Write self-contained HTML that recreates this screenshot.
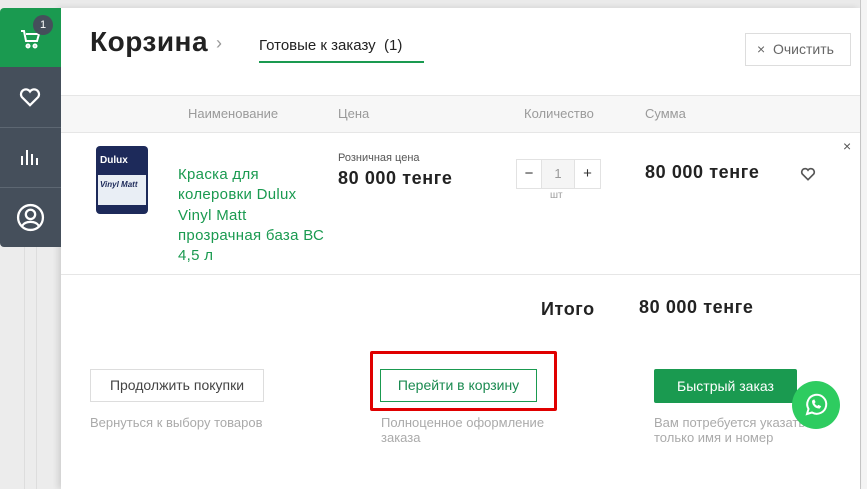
<!DOCTYPE html>
<html><head><meta charset="utf-8"><style>
*{margin:0;padding:0;box-sizing:border-box}
body{width:867px;height:489px;overflow:hidden;background:#ececec;font-family:"Liberation Sans",sans-serif;position:relative}
.a{position:absolute}
.panel{left:61px;top:8px;width:799px;height:481px;background:#fff;box-shadow:-3px 0 6px rgba(0,0,0,.12)}
.sb{left:0;width:61px}
.g{color:#9a9a9a}
.p{font-size:18px;font-weight:bold;color:#222;letter-spacing:.6px}
</style></head><body>
<div class="a" style="left:0;top:0;width:867px;height:8px;background:#eaeaea"></div>
<div class="a" style="left:860px;top:0;width:7px;height:489px;background:#f4f4f4;border-left:1px solid #c8c8c8"></div>
<div class="a" style="left:24px;top:240px;width:1px;height:249px;background:#ddd"></div>
<div class="a" style="left:36px;top:240px;width:1px;height:249px;background:#ddd"></div>
<div class="a panel"></div>
<div class="a sb" style="top:8px;height:59px;background:#1a9a50;border-radius:4px 0 0 0"></div>
<div class="a sb" style="top:67px;height:180px;background:#454f5b;border-radius:0 0 0 4px"></div>
<div class="a sb" style="top:127px;height:1px;background:#5d6772"></div>
<div class="a sb" style="top:187px;height:1px;background:#5d6772"></div>
<svg class="a" style="left:19px;top:27px" width="24" height="24" viewBox="0 0 24 24" fill="none" stroke="#fff" stroke-width="2"><path d="M2 4h3l2 10h11l2-7H7"/><circle cx="9" cy="19" r="1.5"/><circle cx="16" cy="19" r="1.5"/></svg>
<div class="a" style="left:33px;top:15px;width:20px;height:20px;border-radius:50%;background:#454f5b;color:#fff;font-size:11px;text-align:center;line-height:20px">1</div>
<svg class="a" style="left:19px;top:87px" width="22" height="20" viewBox="0 0 24 22" fill="none" stroke="#fff" stroke-width="2.4"><path d="M12 20L3 11a5 5 0 0 1 9-6 5 5 0 0 1 9 6z"/></svg>
<svg class="a" style="left:19px;top:146px" width="22" height="20" viewBox="0 0 22 20" stroke="#fff" stroke-width="2"><path d="M3 19V10M8 19V4M13 19V8M18 19V12"/></svg>
<svg class="a" style="left:16px;top:203px" width="29" height="29" viewBox="0 0 28 28" fill="none" stroke="#fff" stroke-width="2.2"><circle cx="14" cy="14" r="12"/><circle cx="14" cy="11" r="4.5"/><path d="M6 22c3-5 13-5 16 0"/></svg>
<div class="a" style="left:90px;top:26px;font-size:28px;font-weight:bold;color:#222;letter-spacing:.5px">Корзина</div>
<div class="a" style="left:216px;top:33px;font-size:18px;color:#999">›</div>
<div class="a" style="left:259px;top:37px;font-size:15px;color:#222">Готовые к заказу&nbsp; (1)</div>
<div class="a" style="left:259px;top:61px;width:165px;height:2px;background:#1a9a50"></div>
<div class="a" style="left:745px;top:33px;width:106px;height:33px;border:1px solid #ddd;font-size:14px;color:#666;line-height:31px;padding-left:11px">× &nbsp;Очистить</div>
<div class="a" style="left:61px;top:95px;width:799px;height:38px;background:#f7f7f7;border-top:1px solid #e6e6e6;border-bottom:1px solid #e6e6e6"></div>
<div class="a g" style="left:188px;top:106px;font-size:13px">Наименование</div>
<div class="a g" style="left:338px;top:106px;font-size:13px">Цена</div>
<div class="a g" style="left:524px;top:106px;font-size:13px">Количество</div>
<div class="a g" style="left:645px;top:106px;font-size:13px">Сумма</div>
<div class="a" style="left:96px;top:146px;width:52px;height:68px;background:#1d2a5a;border-radius:4px"></div>
<div class="a" style="left:98px;top:175px;width:48px;height:30px;background:#e9eef5"></div>
<div class="a" style="left:100px;top:155px;font-size:10px;color:#fff;font-weight:bold">Dulux</div>
<div class="a" style="left:100px;top:180px;font-size:8px;color:#1d2a5a;font-weight:bold;font-style:italic">Vinyl Matt</div>
<div class="a" style="left:178px;top:165px;font-size:15px;line-height:20.3px;color:#1a9a50;width:152px;letter-spacing:.3px">Краска для колеровки Dulux Vinyl Matt прозрачная база ВС 4,5 л</div>
<div class="a" style="left:338px;top:152px;font-size:11px;color:#555">Розничная цена</div>
<div class="a p" style="left:338px;top:168px">80 000 тенге</div>
<div class="a" style="left:516px;top:159px;width:85px;height:30px;border:1px solid #e2e2e2;display:flex;font-size:15px;color:#333;text-align:center;line-height:28px">
<div style="width:25px;border-right:1px solid #e2e2e2">−</div><div style="width:33px;background:#f5f5f5;color:#999;font-size:13px;border-right:1px solid #e2e2e2">1</div><div style="width:25px">+</div></div>
<div class="a g" style="left:550px;top:190px;font-size:10px">шт</div>
<div class="a p" style="left:645px;top:162px">80 000 тенге</div>
<svg class="a" style="left:800px;top:167px" width="16" height="14" viewBox="0 0 24 22" fill="none" stroke="#555" stroke-width="2.6"><path d="M12 20L3 11a5 5 0 0 1 9-6 5 5 0 0 1 9 6z"/></svg>
<div class="a" style="left:843px;top:138px;font-size:14px;color:#555">×</div>
<div class="a" style="left:61px;top:274px;width:799px;height:1px;background:#e6e6e6"></div>
<div class="a p" style="left:541px;top:299px">Итого</div>
<div class="a p" style="left:639px;top:297px">80 000 тенге</div>
<div class="a" style="left:90px;top:369px;width:174px;height:33px;border:1px solid #ddd;font-size:14px;color:#444;text-align:center;line-height:31px">Продолжить покупки</div>
<div class="a" style="left:90px;top:415px;font-size:13px;color:#aaa">Вернуться к выбору товаров</div>
<div class="a" style="left:370px;top:351px;width:187px;height:60px;border:3px solid #e00000;border-radius:2px"></div>
<div class="a" style="left:380px;top:369px;width:157px;height:33px;border:1px solid #1a9a50;font-size:14px;color:#1a8a50;text-align:center;line-height:31px">Перейти в корзину</div>
<div class="a" style="left:381px;top:415px;font-size:13px;line-height:15px;color:#aaa;width:180px">Полноценное оформление заказа</div>
<div class="a" style="left:654px;top:369px;width:143px;height:34px;background:#1a9a50;border-radius:2px;font-size:14px;color:#fff;text-align:center;line-height:34px">Быстрый заказ</div>
<div class="a" style="left:654px;top:415px;font-size:13px;line-height:15px;color:#aaa;width:200px">Вам потребуется указать<br>только имя и номер</div>
<div class="a" style="left:792px;top:381px;width:48px;height:48px;border-radius:50%;background:#2ecc60"></div>
<svg class="a" style="left:803px;top:392px" width="26" height="26" viewBox="0 0 26 26" fill="none" stroke="#fff" stroke-width="2"><path d="M4 22l1.5-5A9.5 9.5 0 1 1 9 20.5z"/><path d="M9.5 9c0 4 3 7 7 7l1-1.5-2-1-1 1c-1.5-.5-3-2-3.5-3.5l1-1-1-2z" fill="#fff" stroke-width="1"/></svg>
</body></html>
